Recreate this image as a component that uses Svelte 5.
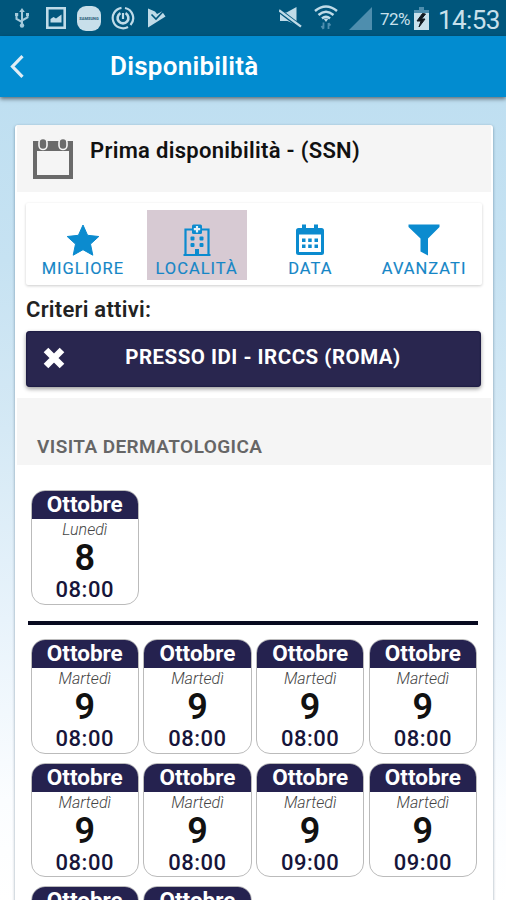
<script lang="ts">
  interface Slot {
    month: string;
    weekday: string;
    day: number;
    time: string;
  }

  const tabs = [
    { id: 'best', label: 'MIGLIORE' },
    { id: 'place', label: 'LOCALITÀ' },
    { id: 'date', label: 'DATA' },
    { id: 'advanced', label: 'AVANZATI' },
  ];

  const martedi = (time: string): Slot => ({ month: 'Ottobre', weekday: 'Martedì', day: 9, time });

  const first: Slot[] = [{ month: 'Ottobre', weekday: 'Lunedì', day: 8, time: '08:00' }];
  const others: Slot[] = [
    '08:00', '08:00', '08:00', '08:00',
    '08:00', '08:00', '09:00', '09:00',
    '09:00', '09:00',
  ].map(martedi);

  let active = $state('place');
</script>

{#snippet slotCard(s: Slot)}
  <button class="slot">
    <span class="month">{s.month}</span>
    <span class="weekday">{s.weekday}</span>
    <span class="day">{s.day}</span>
    <span class="time">{s.time}</span>
  </button>
{/snippet}

<div class="screen">
  <div class="statusbar">
    <div class="status-left">
      <svg width="16" height="20" viewBox="0 0 16 20" fill="none" stroke="#a5cadb" stroke-width="2">
        <path d="M8 3v13M2.500 6v5L8 14M13.500 6v3.500L8 12.500" />
        <path d="M8 0l2.800 4H5.200z" fill="#a5cadb" stroke="none" />
        <circle cx="8" cy="17.500" r="2.200" fill="#a5cadb" stroke="none" />
        <path d="M1 5h3.200v3H1zM12 5h3v3h-3z" fill="#a5cadb" stroke="none" />
      </svg>
      <svg width="20" height="22" viewBox="0 0 20 22">
        <path d="M1.300 1.300h17.400v19.400H1.300z" fill="none" stroke="#bfdbe8" stroke-width="2.600" />
        <path d="M4.500 15.500V12l3-2 2.500 1.500 5.500-4v8z" fill="#bfdbe8" />
      </svg>
      <div class="app-badge"><span>SAMSUNG</span></div>
      <svg width="24" height="24" viewBox="0 0 24 24" fill="none" stroke="#bfdbe8" stroke-width="2.200">
        <path d="M10.500 1.800A10.300 10.300 0 1 0 17 21" />
        <path d="M14 2A10.300 10.300 0 0 1 19.500 19" />
        <path d="M9.500 7.200A5.400 5.400 0 1 0 14.500 7.200" stroke-width="2.600" />
        <path d="M12 7v6" />
      </svg>
      <svg width="19" height="20" viewBox="0 0 19 20">
        <path d="M1 0.500l7 3 2 2.500 5-2.500 3.500 5L1 19.500z" fill="#bfdbe8" />
        <path d="M4.500 6.500l4.500 4.500 8-8.500" fill="none" stroke="#00567c" stroke-width="1.600" />
      </svg>
    </div>
    <div class="status-right">
      <svg class="mute" width="23" height="22" viewBox="0 0 23 22">
        <path d="M1 5.500h6.500L17.500 0v18l-9-4H1z" fill="#bfdbe8" />
        <path d="M0 1.700l21.500 16.500" stroke="#00567c" stroke-width="2" />
        <path d="M0 5l21 16" stroke="#00567c" stroke-width="2" />
        <path d="M0 3.200l22 16.500" stroke="#bfdbe8" stroke-width="2.300" />
      </svg>
      <svg class="wifi" width="24" height="25" viewBox="0 0 24 25" fill="none" stroke="#bfdbe8" stroke-width="2.500">
        <path d="M1 6q11-9 22 0M4.500 10q7.500-6.500 15 0M8 13.500q4-3.500 8 0" />
        <path d="M9.500 13.500h5l-2.500 3.500z" fill="#bfdbe8" stroke="none" />
        <path d="M9.500 17.500v6M7.500 21l2 3M14.500 24v-6M16.500 20.500l-2-2.500" stroke="#4e8eae" stroke-width="1.800" />
      </svg>
      <svg class="signal" width="23" height="23" viewBox="0 0 23 23">
        <path d="M23 0v23H0z" fill="#4e8eae" />
      </svg>
      <span class="percent">72%</span>
      <svg class="battery" width="15" height="23" viewBox="0 0 15 23">
        <path d="M5 0h5v3h5v5H0V3h5z" fill="#4e8eae" />
        <path d="M0 6h15v17H0z" fill="#c8e0eb" />
        <path d="M8.500 6.500L3 14h4l-2 6 6-8H7.500l4-5z" fill="#101820" stroke="#101820" />
      </svg>
      <span class="clock">14:53</span>
    </div>
  </div>

  <header class="toolbar">
    <button class="back" aria-label="Indietro">
      <svg width="14" height="23" viewBox="0 0 14 23" fill="none" stroke="#e0edf5" stroke-width="3.200">
        <path d="M12.500 1.200L2.500 11.500l10 10.300" />
      </svg>
    </button>
    <h1>Disponibilità</h1>
  </header>

  <main class="card">
    <div class="card-header">
      <svg width="42" height="42" viewBox="0 0 42 42">
        <path d="M1 3h40v38H1zM5 13v24h32V13z" fill="#6a6a6a" fill-rule="evenodd" />
        <g fill="#6a6a6a" stroke="#f5f5f5" stroke-width="1.600">
          <rect x="7" y="0.500" width="8" height="11" rx="4" />
          <rect x="27" y="0.500" width="8" height="11" rx="4" />
        </g>
      </svg>
      <h2>Prima disponibilità - (SSN)</h2>
    </div>

    <nav class="tabs">
      {#each tabs as tab}
        <button class="tab" class:active={active === tab.id} onclick={() => (active = tab.id)}>
          <svg width="34" height="32" viewBox="0 0 34 32" fill="#0b8bcf">
            {#if tab.id === 'best'}
              <path
                d="M17 1l4.600 10.300 11.200 1.200-8.300 7.600 2.300 11.100L17 25.700l-9.800 5.500 2.300-11.100L1.200 12.500l11.200-1.200z"
                stroke="#0b8bcf"
                stroke-linejoin="round"
              />
            {:else if tab.id === 'place'}
              <path d="M3.500 31h27" stroke="#0b8bcf" stroke-width="2" />
              <path d="M12 5.500H5.500V30.500M22 5.500h6.500V30.500" fill="none" stroke="#0b8bcf" stroke-width="2.200" />
              <rect x="12" y="0.500" width="10" height="9.500" rx="1.500" />
              <path d="M17 2v6.500M13.800 5.200h6.400" stroke="#e4f1f8" stroke-width="2.200" />
              <g>
                <rect x="10.500" y="12.500" width="4" height="4" rx="1" />
                <rect x="19.500" y="12.500" width="4" height="4" rx="1" />
                <rect x="10.500" y="19" width="4" height="4" rx="1" />
                <rect x="19.500" y="19" width="4" height="4" rx="1" />
              </g>
              <path d="M15 31v-6h4v6z" />
            {:else if tab.id === 'date'}
              <path
                d="M9 0.500h4V4h8V0.500h4V4h3.500a2.500 2.500 0 0 1 2.500 2.500v22a2.500 2.500 0 0 1-2.500 2.500h-23A2.500 2.500 0 0 1 3 28.500v-22A2.500 2.500 0 0 1 5.500 4H9zM6 10.500V28h22V10.500z"
                fill-rule="evenodd"
              />
              <path d="M9 14.500h3.500v3.500H9zM15.200 14.500h3.500v3.500h-3.500zM21.500 14.500h3.500v3.500h-3.500zM9 20.500h3.500v3.500H9zM15.200 20.500h3.500v3.500h-3.500zM21.500 20.500h3.500v3.500h-3.500z" />
            {:else}
              <path d="M1.500 0.500h31v2.500L21 14.500V31.500l-7.500-4V14.500L1.500 3z" />
            {/if}
          </svg>
          <span>{tab.label}</span>
        </button>
      {/each}
    </nav>

    <h3>Criteri attivi:</h3>

    <button class="filter">
      <svg width="22" height="22" viewBox="0 0 22 22" stroke="#fff" stroke-width="6.500">
        <path d="M3 3l16 16M19 3L3 19" />
      </svg>
      <span>PRESSO IDI - IRCCS (ROMA)</span>
    </button>

    <div class="section">VISITA DERMATOLOGICA</div>

    <div class="slots">
      {#each first as s}
        {@render slotCard(s)}
      {/each}
    </div>
    <hr />
    <div class="slots">
      {#each others as s}
        {@render slotCard(s)}
      {/each}
    </div>
  </main>
</div>

<style>
  :global(body) {
    overflow: hidden;
  }

  .screen {
    width: 506px;
    height: 900px;
    overflow: hidden;
    display: flex;
    flex-direction: column;
    font-family: Roboto, 'Liberation Sans', sans-serif;
    background: linear-gradient(#bfdff1 100px, #c6e2f2 260px, #d5e9f5 430px, #e8f3fb 620px, #fbfdff 800px, #fff);
  }

  button {
    font: inherit;
    border: none;
    background: none;
    padding: 0;
    cursor: pointer;
  }

  svg {
    display: block;
    flex: none;
  }

  h1, h2, h3 {
    margin: 0;
    font-weight: 600;
    white-space: nowrap;
  }

  .statusbar {
    flex: none;
    height: 36px;
    background: #00567c;
    display: flex;
    justify-content: space-between;
    align-items: center;
    padding: 0 6px 0 14px;
    box-sizing: border-box;
  }

  .status-left,
  .status-right {
    display: flex;
    align-items: center;
  }

  .status-left svg:first-child {
    margin-right: 16px;
  }

  .app-badge {
    width: 24px;
    height: 25px;
    margin: 0 10px 0 11px;
    border-radius: 9px;
    background: #c8dfea;
    display: flex;
    align-items: center;
    justify-content: center;
    font-size: 4px;
    font-weight: 700;
    color: #245a75;
  }

  .status-left svg:last-child {
    margin-left: 12px;
  }

  .mute {
    margin-right: 12px;
  }

  .wifi {
    margin-right: 11px;
    margin-top: -2px;
  }

  .percent {
    margin-left: 8px;
    width: 31px;
    font-size: 17px;
    line-height: 20px;
    letter-spacing: -0.6px;
    color: #c8e0eb;
    margin-top: 1px;
  }

  .battery {
    margin-left: 3px;
    margin-right: 9px;
  }

  .clock {
    width: 62px;
    font-size: 26px;
    line-height: 30px;
    letter-spacing: -0.6px;
    color: #c8e0eb;
    margin-top: 3px;
  }

  .toolbar {
    flex: none;
    height: 61px;
    background: #028cd0;
    box-shadow: 0 2px 4px rgba(0, 0, 0, 0.5);
    display: flex;
    align-items: center;
    padding-left: 10px;
  }

  .back {
    width: 100px;
    margin-top: -1px;
  }

  h1 {
    color: #fff;
    font-size: 26px;
    line-height: 34px;
    letter-spacing: 0.25px;
    margin-top: -1px;
  }

  .card {
    flex: none;
    width: 474px;
    margin: 28px 0 0 15px;
    height: 900px;
    padding: 0 2px;
    background: #fff;
    border-radius: 3px;
    box-shadow: 0 1px 3px rgba(0, 40, 70, 0.45);
  }

  .card-header {
    height: 67px;
    box-sizing: border-box;
    padding: 13px 0 0 15px;
    background: #f5f5f5;
    display: flex;
    gap: 16px;
  }

  h2 {
    font-size: 22px;
    line-height: 26px;
    letter-spacing: 0.3px;
    color: #111;
  }

  .tabs {
    margin: 11px 9px 0;
    height: 82px;
    box-sizing: border-box;
    padding: 7px 1px 5px 0;
    display: grid;
    grid-template-columns: repeat(4, 100px);
    justify-content: space-around;
    border-radius: 2px;
    box-shadow: 0 1px 3px rgba(0, 0, 0, 0.2);
  }

  .tab {
    display: flex;
    flex-direction: column;
    align-items: center;
    padding-top: 14px;
    color: #1686c6;
    font-size: 16.500px;
    line-height: 20px;
    letter-spacing: 1px;
    text-align: center;
    -webkit-text-stroke: 0.15px #1686c6;
  }

  .tab.active {
    background: #d7cad3;
  }

  .tab span {
    margin-top: 3px;
  }

  h3 {
    margin: 12px 0 0 9px;
    font-size: 22px;
    line-height: 26px;
    letter-spacing: 0.25px;
    color: #222;
  }

  .filter {
    width: 455px;
    height: 56px;
    margin: 8px 0 0 9px;
    padding: 0 20px 5px 17px;
    box-sizing: border-box;
    display: flex;
    align-items: center;
    background: #29264f;
    border-radius: 4px;
    box-shadow: 0 2px 4px rgba(0, 0, 0, 0.4), inset 0 0 2px #06052c;
    color: #fff;
    font-size: 20.500px;
    font-weight: 700;
    letter-spacing: 0.5px;
  }

  .filter svg {
    margin-top: 3px;
  }

  .filter span {
    flex: 1;
    text-align: center;
  }

  .section {
    margin-top: 11px;
    height: 67px;
    box-sizing: border-box;
    padding: 36px 0 0 20px;
    background: #f5f5f5;
    color: #666;
    font-size: 19px;
    font-weight: 600;
    line-height: 25px;
    letter-spacing: 0.42px;
  }

  .slots {
    display: grid;
    grid-template-columns: repeat(4, 108.500px);
    gap: 9.200px 4.200px;
    padding-left: 13.500px;
  }

  .section + .slots {
    margin-top: 25px;
  }

  .slot {
    height: 114.500px;
    box-sizing: border-box;
    border: 1px solid #bbb;
    border-radius: 14px;
    overflow: hidden;
    display: flex;
    flex-direction: column;
    background: #fff;
    color: #111;
    text-align: center;
  }

  .slot span {
    display: block;
    align-self: stretch;
  }

  .month {
    height: 28px;
    background: #25224f;
    color: #fff;
    font-size: 22.500px;
    font-weight: 700;
    line-height: 27px;
  }

  .weekday {
    height: 20px;
    font-size: 16px;
    font-style: italic;
    font-weight: 300;
    line-height: 22px;
    color: #444;
  }

  .day {
    height: 37px;
    font-size: 36px;
    font-weight: 600;
    line-height: 39px;
  }

  .time {
    font-size: 22px;
    font-weight: 500;
    line-height: 27px;
    letter-spacing: 0.5px;
    color: #17153a;
  }

  hr {
    width: 450px;
    height: 4px;
    margin: 16px 0 14.500px 11px;
    border: none;
    background: #080a20;
  }
</style>
